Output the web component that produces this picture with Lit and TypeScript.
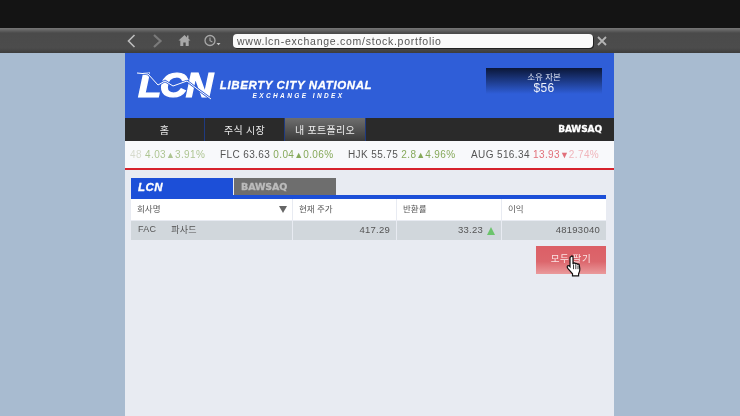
import { LitElement, html, css } from "lit";
import { customElement } from "lit/decorators.js";

@customElement("app-root")
export class AppRoot extends LitElement {
  static styles = css`
    :host {
      display: block;
      width: 740px;
      height: 416px;
      overflow: hidden;
      background: #a8bbd0;
      font-family: "Liberation Sans", "Noto Sans CJK KR", sans-serif;
      color: #444;
    }
    .frame { height: 416px; display: flex; flex-direction: column; filter: blur(0.35px); }
    .black { height: 28px; background: #141414; flex: none; }
    .bar {
      height: 25px; flex: none; display: flex; align-items: center;
      background: linear-gradient(#777 0, #666 2px, #4a4a4a 5px, #4c4c4c 20px, #3c3c3c 100%);
      padding-left: 125px; box-sizing: border-box; position: relative;
    }
    .bar svg { display: block; flex: none; }
    .back { margin-left: 2px; }
    .fwd { margin-left: 16px; }
    .homeic { margin-left: 15px; }
    .clock { margin-left: 13px; }
    .url {
      margin-left: 11px; width: 360px; height: 14px; box-sizing: border-box; background: #fafafa;
      border-radius: 4px; box-shadow: 1px 1px 0 #222; font-size: 10.5px; letter-spacing: 0.74px;
      line-height: 14px; padding-left: 4px; color: #555; white-space: nowrap;
    }
    .x { margin-left: 4px; }
    .page { flex: 1; width: 489px; margin-left: 125px; background: #e8ebf2; display: flex; flex-direction: column; }
    .hdr {
      height: 65px; flex: none; background: #2f5ed8; display: flex; align-items: flex-start;
      padding: 15px 12px 0 12px; box-sizing: border-box; color: #fff;
    }
    .logo { position: relative; width: 76px; height: 33px; flex: none; }
    .logotext {
      font: italic 900 35px/33px "Liberation Sans", sans-serif; letter-spacing: -1.5px; color: #fff;
      -webkit-text-stroke: 1.2px #fff; display: block; padding-left: 1px; transform: scaleX(1.09); transform-origin: left;
    }
    .logoline { position: absolute; left: 0; top: 0; }
    .titles { margin-left: 5px; margin-top: 11px; width: 156px; flex: none; text-align: center; }
    .t1 { font: italic 700 11.5px/12px "Liberation Sans", sans-serif; letter-spacing: 0.6px; white-space: nowrap; -webkit-text-stroke: 0.3px #fff; }
    .t2 { font: italic 700 6.5px/8px "Liberation Sans", sans-serif; letter-spacing: 2.4px; white-space: nowrap; margin-top: 1px; padding-left: 5px; }
    .cap {
      margin-left: auto; width: 116px; height: 26px; box-sizing: border-box; text-align: center;
      background: linear-gradient(#0b1738, #2f5ed8); color: #fff;
    }
    .cap1 { font-size: 8.5px; line-height: 10px; padding-top: 4px; color: #dfe6f5; }
    .cap2 { font-size: 12px; line-height: 12px; color: #eef2fb; letter-spacing: 0.3px; }
    .nav { height: 23px; flex: none; background: #2a2a2a; display: flex; color: #e8e8e8; font-size: 10px; letter-spacing: 0.3px; }
    .nav div.i { width: 80px; display: flex; align-items: center; justify-content: center; box-sizing: border-box; border-right: 1px solid #1f3a80; }
    .nav div.i.act { width: 81px; background: linear-gradient(#6e6e6e, #3a3a3a); color: #eee; }
    .baw {
      font: 700 9px/1 "DejaVu Sans", sans-serif; letter-spacing: -0.1px; color: #fff;
      -webkit-text-stroke: 0.3px #fff;
    }
    .nav .baw { margin-left: auto; margin-right: 12px; align-self: center; }
    .tick {
      height: 29px; flex: none; box-sizing: border-box; background: #f8f9fb; border-bottom: 2px solid #d6222c;
      display: flex; align-items: center; font-size: 10px; letter-spacing: 0.38px; white-space: nowrap; overflow: hidden;
      color: #555; position: relative;
    }
    .item { display: block; flex: none; }
    .i0 { margin-left: 5px; width: 90px; }
    .i1 { width: 128px; } .i2 { width: 123px; }
    .up { color: #86a95a; } .dn { color: #e2707a; }
    .fadeL { opacity: 0.65; }
    .fadeR { color: #f0b6bc; }
    .fadeL2 { color: #c5cbb5; }
    .arrow { font-size: 9px; letter-spacing: 0; }
    .content { padding: 8px 8px 0 6px; display: flex; flex-direction: column; position: relative; }
    .tabs { display: flex; gap: 1px; height: 17px; }
    .tab { width: 102px; box-sizing: border-box; padding-left: 7px; display: flex; align-items: center; }
    .tab.a { background: #1c4fd8; color: #fff; }
    .tab.b { background: #6e6e6e; }
    .tab.a .ltab { font: italic 900 11.5px/1 "Liberation Sans", sans-serif; letter-spacing: 0.4px; color: #fff; -webkit-text-stroke: 0.3px #fff; padding-top: 2px; }
    .tab.b .baw { color: #bcbcbc; font-size: 9.5px; -webkit-text-stroke-color: #bcbcbc; padding-top: 1px; }
    .rule { height: 4px; background: #1c4fd8; }
    .grid { display: grid; grid-template-columns: 161px 103px 104px 104px; gap: 1px; background: #e8ebf2; font-size: 8.5px; }
    .h { background: #fff; height: 21px; display: flex; align-items: center; padding: 0 6px 4px 6px; box-sizing: border-box; color: #555; justify-content: space-between; }
    .c { background: #d1d7dc; height: 19px; display: flex; align-items: center; justify-content: flex-end; padding: 0 6px 2px; box-sizing: border-box; font-size: 9.5px; letter-spacing: 0.25px; color: #555; }
    .c.n { justify-content: flex-start; gap: 15px; font-size: 9px; padding: 0 0 3px 7px; }
    .sort { width: 0; height: 0; border-left: 4px solid transparent; border-right: 4px solid transparent; border-top: 7px solid #666; margin: 4px -1px 0 0; }
    .tri { width: 0; height: 0; border-left: 4.5px solid transparent; border-right: 4.5px solid transparent; border-bottom: 8px solid #6cc46c; margin: 2px 0 0 4px; }
    .actions { display: flex; justify-content: flex-end; margin-top: 6px; }
    .btn {
      width: 70px; height: 28px; padding-bottom: 4px; box-sizing: border-box; background: linear-gradient(#dc5f66 0, #dc666c 55%, #ea9a9c 100%); color: #fbe6e6;
      display: flex; align-items: center; justify-content: center; font-size: 9.5px; letter-spacing: 0.6px;
    }
    .cursor { position: absolute; left: 441px; top: 85px; }
  `;

  render() {
    return html`<div class="frame">
      <div class="black"></div>
      <div class="bar">
        <svg class="back" width="9" height="14" viewBox="0 0 9 14"><path d="M7.500 1 1.500 7l6 6" fill="none" stroke="#bdbdbd" stroke-width="1.6"/></svg>
        <svg class="fwd" width="11" height="14" viewBox="0 0 11 14"><path d="M2 1l6.500 6L2 13" fill="none" stroke="#7a7a7a" stroke-width="2.2"/></svg>
        <svg class="homeic" width="13" height="13" viewBox="0 0 13 13"><path d="M6.500 1 0.500 6.600h1.800V12h3V8.400h2.400V12h3V6.600h1.800L10.500 4.800V1.600H9V3.400z" fill="#a8a8a8"/></svg>
        <svg class="clock" width="18" height="13" viewBox="0 0 18 13"><circle cx="6" cy="6.500" r="5" fill="none" stroke="#a8a8a8" stroke-width="1.300"/><path d="M6 3.400v3.300l2.400 1.200" fill="none" stroke="#a8a8a8" stroke-width="1.100"/><path d="M12.500 9h4l-2 2.200z" fill="#c4c4c4"/></svg>
        <div class="url">www.lcn-exchange.com/stock.portfolio</div>
        <svg class="x" width="10" height="10" viewBox="0 0 10 10"><path d="M1 1l8 8M9 1l-8 8" stroke="#b4b4b4" stroke-width="1.800"/></svg>
      </div>
      <div class="page">
        <div class="hdr">
          <div class="logo">
            <span class="logotext">LCN</span>
            <svg class="logoline" width="76" height="33" viewBox="0 0 76 33"><path d="M0 5l11 1 10 11 7-4 8 5 14-5 9 7 15 11" fill="none" stroke="#2f5ed8" stroke-width="2.400"/><path d="M0 5l11 1 10 11 7-4 8 5 14-5 9 7 15 11" fill="none" stroke="#fff" stroke-width="1"/></svg>
          </div>
          <div class="titles">
            <div class="t1">LIBERTY CITY NATIONAL</div>
            <div class="t2">EXCHANGE INDEX</div>
          </div>
          <div class="cap"><div class="cap1">소유 자본</div><div class="cap2">$56</div></div>
        </div>
        <div class="nav">
          <div class="i">홈</div>
          <div class="i">주식 시장</div>
          <div class="i act">내 포트폴리오</div>
          <span class="baw">BAWSAQ</span>
        </div>
        <div class="tick">
          <span class="item i0 fadeL"><span class="fadeL2">48</span> <span class="up">4.03<span class="arrow">▲</span>3.91%</span></span>
          <span class="item i1">FLC 63.63 <span class="up">0.04<span class="arrow">▲</span>0.06%</span></span>
          <span class="item i2">HJK 55.75 <span class="up">2.8<span class="arrow">▲</span>4.96%</span></span>
          <span class="item">AUG 516.34 <span class="dn">13.93<span class="arrow">▼</span></span><span class="fadeR">2.74%</span></span>
        </div>
        <div class="content">
          <div class="tabs">
            <div class="tab a"><span class="ltab">LCN</span></div>
            <div class="tab b"><span class="baw">BAWSAQ</span></div>
          </div>
          <div class="rule"></div>
          <div class="grid">
            <div class="h">회사명<span class="sort"></span></div>
            <div class="h">현재 주가</div>
            <div class="h">반환률</div>
            <div class="h">이익</div>
            <div class="c n"><span>FAC</span><span>파사드</span></div>
            <div class="c">417.29</div>
            <div class="c">33.23<span class="tri"></span></div>
            <div class="c">48193040</div>
          </div>
          <div class="actions"><div class="btn">모두 팔기</div></div>
          <svg class="cursor" width="16" height="22" viewBox="0 0 16 21" preserveAspectRatio="none">
            <path d="M5 1.500c1 -1 2 -.5 2 .8V8l1-.3c.8-.2 1.300 0 1.600.6.8-.4 1.500-.2 1.800.5.9-.4 1.700 0 1.900.9l.5 3.500c.2 2-.5 3.500-1.200 4.800V20H6.500v-2L2 13c-1-1.300-1-2.200-.3-2.700.7-.4 1.500-.1 2.300.8V2.500c0-.4.4-.8 1-1z" fill="#fff" stroke="#111" stroke-width="1.200"/>
            <path d="M7.500 9v4.500M9.800 9v4.500M12 10v3.500" stroke="#111" stroke-width=".8"/>
          </svg>
        </div>
      </div>
    </div>`;
  }
}
